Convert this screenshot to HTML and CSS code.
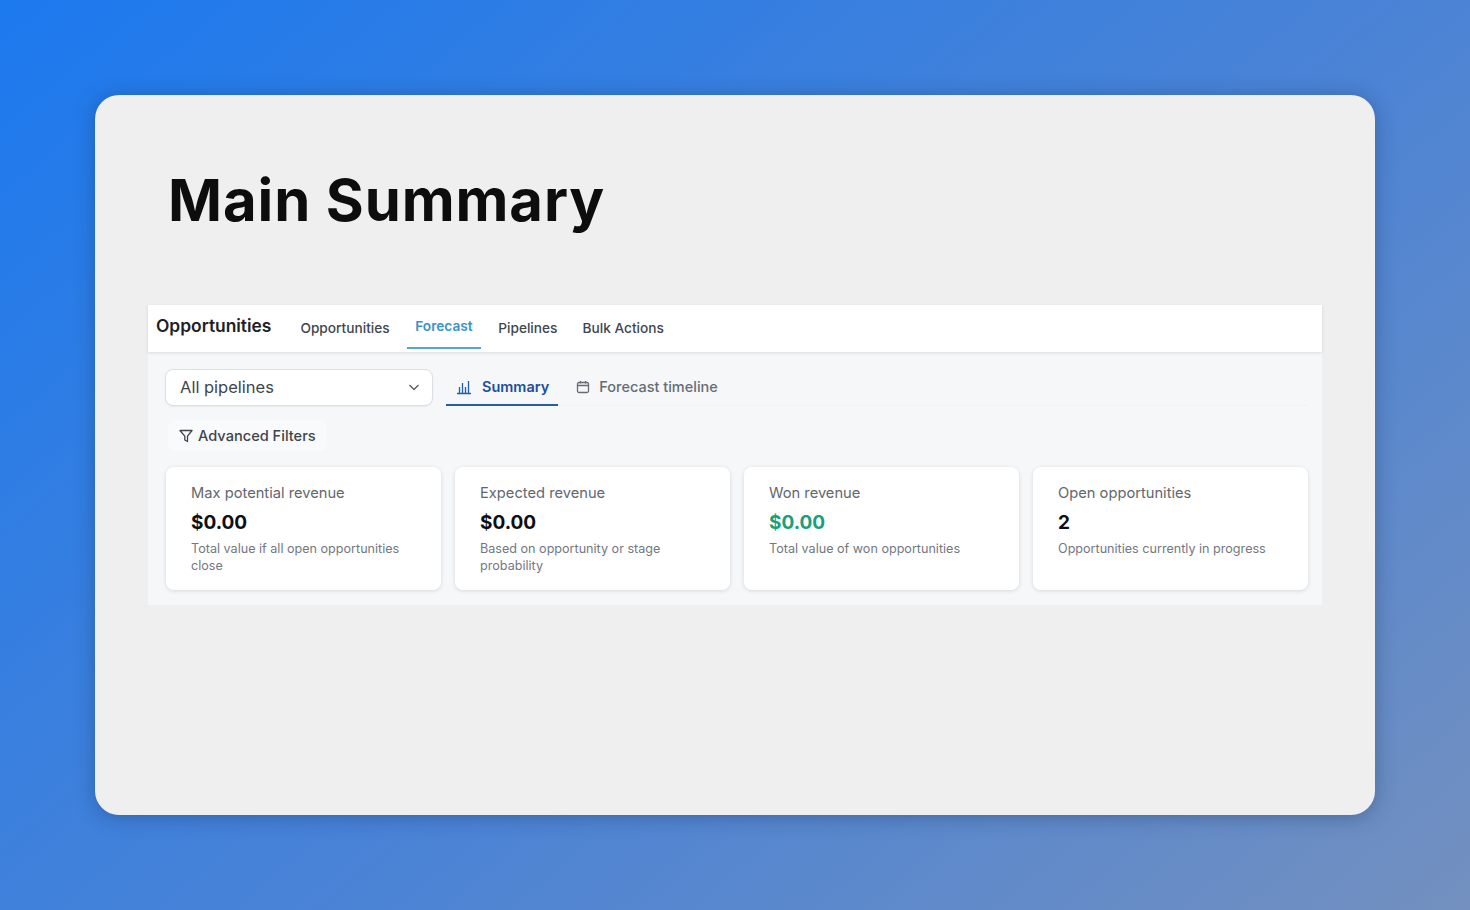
FILE: index.html
```html
<!DOCTYPE html>
<html lang="en">
<head>
    <meta charset="UTF-8">
    <meta name="viewport" content="width=device-width, initial-scale=1.0">
    <title>Main Summary</title>
    <link rel="stylesheet" href="styles.css">
</head>
<body>
    <div class="slide">
        <h1 class="slide-title">Main Summary</h1>

        <div class="panel">
            <div class="panel-header">
                <h2>Opportunities</h2>
                <nav class="tabs">
                    <a class="tab">Opportunities</a>
                    <a class="tab active">Forecast</a>
                    <a class="tab">Pipelines</a>
                    <a class="tab">Bulk Actions</a>
                </nav>
            </div>

            <div class="panel-body">
                <div class="toolbar">
                    <div class="select">
                        <span>All pipelines</span>
                        <svg width="12" height="12" viewBox="0 0 12 12" fill="none" stroke="#555b63" stroke-width="1.3"><path d="M1.5 4l4.5 4.5L10.5 4"/></svg>
                    </div>
                    <div class="subtabs">
                        <a class="subtab active">
                            <svg width="16" height="16" viewBox="0 0 16 16" fill="none" stroke="#1f5fa8" stroke-width="1.3"><path d="M1 14.5h14M3.5 14.5V8M6.5 14.5V4M9.5 14.5V8M12.5 14.5V2"/></svg>
                            Summary
                        </a>
                        <a class="subtab">
                            <svg width="14" height="14" viewBox="0 0 14 14" fill="none" stroke="#666c74" stroke-width="1.3"><rect x="1.5" y="2.5" width="11" height="10" rx="1.5"/><path d="M1.5 5.5h11M4.5 1v2.5M9.5 1v2.5"/></svg>
                            Forecast timeline
                        </a>
                    </div>
                </div>

                <button class="filters">
                    <svg width="14" height="14" viewBox="0 0 14 14" fill="none" stroke="#3f444b" stroke-width="1.3" stroke-linejoin="round"><path d="M1 1.5h12L8.5 7.2v5.3L5.8 11V7.2z"/></svg>
                    Advanced Filters
                </button>

                <div class="cards">
                    <div class="card">
                        <div class="card-label">Max potential revenue</div>
                        <div class="card-value">$0.00</div>
                        <div class="card-desc">Total value if all open opportunities close</div>
                    </div>
                    <div class="card">
                        <div class="card-label">Expected revenue</div>
                        <div class="card-value">$0.00</div>
                        <div class="card-desc">Based on opportunity or stage probability</div>
                    </div>
                    <div class="card">
                        <div class="card-label">Won revenue</div>
                        <div class="card-value green">$0.00</div>
                        <div class="card-desc">Total value of won opportunities</div>
                    </div>
                    <div class="card">
                        <div class="card-label">Open opportunities</div>
                        <div class="card-value">2</div>
                        <div class="card-desc">Opportunities currently in progress</div>
                    </div>
                </div>
            </div>
        </div>
    </div>
</body>
</html>
```

FILE: styles.css
```css
* {
    box-sizing: border-box;
    margin: 0;
    padding: 0;
    font-family: Inter, 'Liberation Sans', sans-serif;
}

body {
    height: 100vh;
    padding: 95px;
    background: linear-gradient(140deg, #1c79ee 0%, #4a83d6 55%, #7390bf 100%);
    overflow: hidden;
}

.slide {
    height: 720px;
    padding: 0 53px;
    background-color: #efeff0;
    border-radius: 24px;
    box-shadow: 0 2px 20px rgba(20, 40, 80, 0.35);
}

.slide-title {
    height: 210px;
    padding: 70px 0 0 20px;
    font-size: 58px;
    line-height: 70px;
    font-weight: 700;
    letter-spacing: 0.9px;
    color: #0d0d0d;
}

.panel {
    background-color: #f5f7f9;
}

.panel-header {
    display: flex;
    align-items: center;
    gap: 21px;
    height: 47px;
    padding-left: 8px;
    background-color: white;
    box-shadow: 0 1px 3px rgba(0, 0, 0, 0.12);
}

.panel-header h2 {
    font-size: 17.4px;
    font-weight: 600;
    color: #1d2127;
    margin-bottom: 7px;
}

.tabs {
    display: flex;
    gap: 9px;
    height: 100%;
}

.tab {
    display: flex;
    align-items: center;
    height: 44px;
    padding: 1px 8px 0;
    font-size: 13.7px;
    font-weight: 500;
    color: #41464d;
}

.tab.active {
    padding: 0 8.5px;
    color: #3a93c4;
    font-weight: 600;
    border-bottom: 2px solid #5aa5cd;
}

.panel-body {
    padding: 17px 14px 15px 18px;
}

.toolbar {
    display: flex;
    gap: 13px;
}

.select {
    display: flex;
    align-items: center;
    justify-content: space-between;
    width: 268px;
    height: 37px;
    margin-left: -1px;
    padding: 0 12px 1px 14px;
    background-color: white;
    border: 1px solid #dcdee2;
    border-radius: 8px;
    box-shadow: 0 1px 2px rgba(0, 0, 0, 0.05);
    font-size: 16.5px;
    color: #40454c;
}

.subtabs {
    display: flex;
    flex: 1;
    gap: 8px;
    height: 37px;
    border-bottom: 1px solid #f0f2f4;
}

.subtab {
    display: flex;
    align-items: center;
    gap: 10px;
    height: 37px;
    padding: 0 9px 0 10px;
    border-bottom: 2px solid transparent;
    font-size: 14.5px;
    font-weight: 500;
    color: #666c74;
}

.subtab.active {
    color: #1c4f9c;
    font-weight: 600;
    border-bottom-color: #2a5d9f;
}

.subtab:not(.active) {
    gap: 9px;
}

.filters {
    display: flex;
    align-items: center;
    gap: 5px;
    margin: 14px 0 16px 2px;
    height: 31px;
    padding: 0 11px;
    background-color: #f9fafb;
    border: none;
    border-radius: 8px;
    font-size: 14.6px;
    font-weight: 500;
    color: #3f444b;
}

.cards {
    display: grid;
    grid-template-columns: repeat(4, 1fr);
    gap: 14px;
}

.card {
    height: 123px;
    padding: 17px 24px 0 25px;
    background-color: white;
    border-radius: 8px;
    box-shadow: 0 1px 4px rgba(0, 0, 0, 0.13);
}

.card-label {
    font-size: 14.7px;
    line-height: 18px;
    color: #62676e;
}

.card-value {
    margin-top: 9px;
    font-size: 19px;
    line-height: 24px;
    font-weight: 700;
    color: #0c0f14;
}

.card-value.green {
    color: #18a07a;
}

.card-desc {
    margin-top: 5px;
    font-size: 12.6px;
    line-height: 17px;
    color: #73787f;
}
```
